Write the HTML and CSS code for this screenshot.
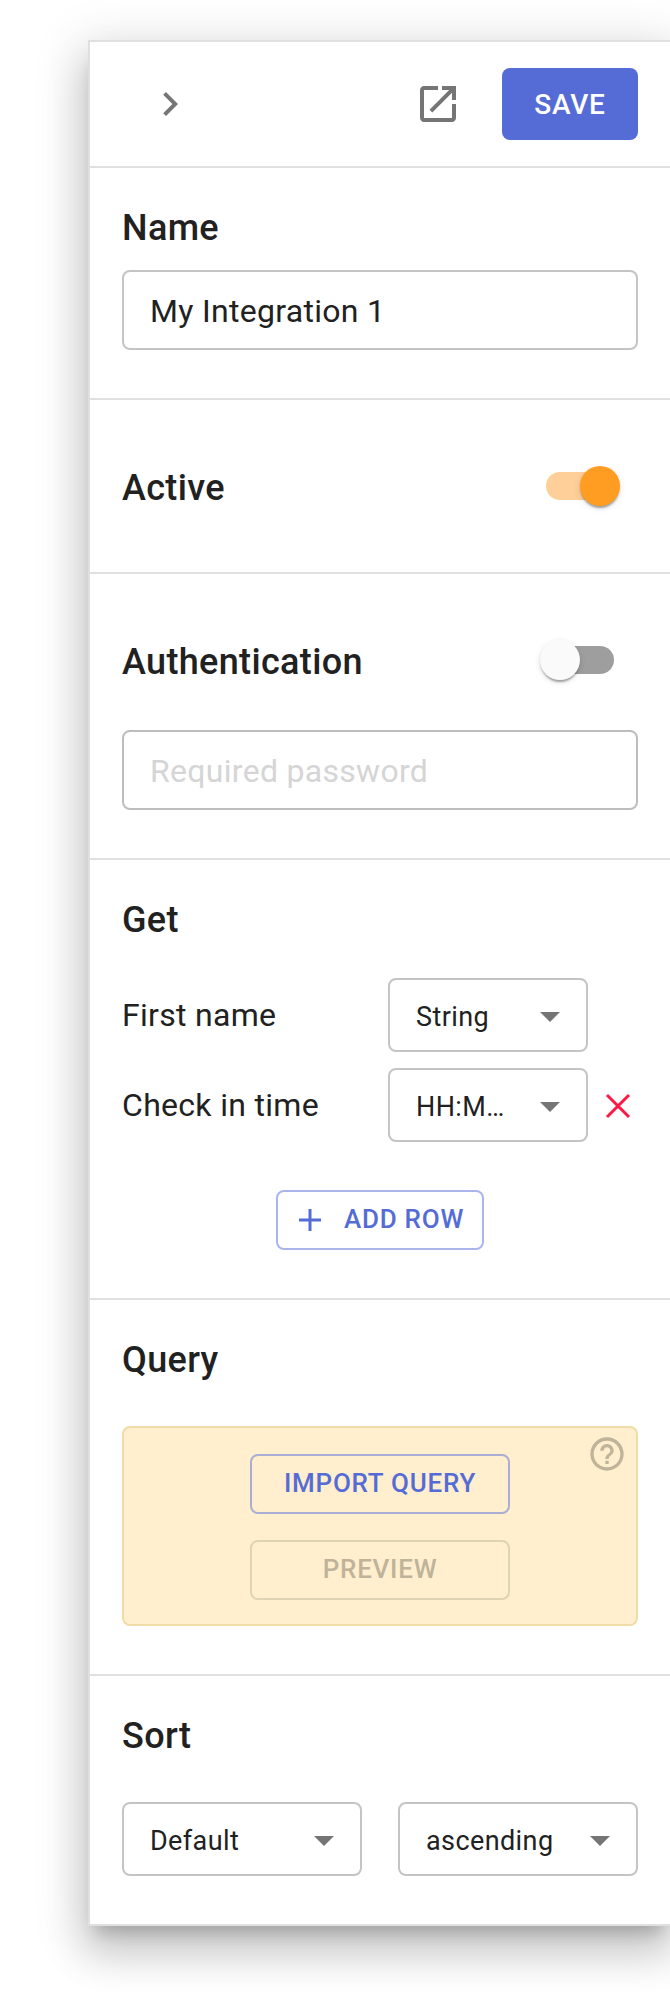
FILE: index.html
```html
<!DOCTYPE html>
<html lang="en">
<head>
<meta charset="utf-8">
<title>Integration settings</title>
<link rel="stylesheet" href="styles.css">
</head>
<body>
<main class="panel">
  <header class="toolbar">
    <button class="icon-button" aria-label="Collapse"><svg class="icon" width="48" height="48" viewBox="0 0 24 24"><path d="M10 6 8.59 7.41 13.17 12l-4.58 4.59L10 18l6-6z"/></svg></button>
    <button class="icon-button open-link" aria-label="Open in new tab"><svg class="icon" width="48" height="48" viewBox="0 0 24 24"><path d="M19 19H5V5h7V3H5c-1.11 0-2 .9-2 2v14c0 1.1.89 2 2 2h14c1.1 0 2-.9 2-2v-7h-2v7zM14 3v2h3.59l-9.83 9.83 1.41 1.41L19 6.41V10h2V3h-7z"/></svg></button>
    <button class="button button-save">SAVE</button>
  </header>

  <section class="section section-name">
    <h2 class="title">Name</h2>
    <div class="field">My Integration 1</div>
  </section>

  <section class="section section-active">
    <h2 class="title">Active</h2>
    <span class="switch switch-on"><span class="thumb"></span></span>
  </section>

  <section class="section section-auth">
    <div class="auth-row">
      <h2 class="title">Authentication</h2>
      <span class="switch switch-off"><span class="thumb"></span></span>
    </div>
    <div class="field placeholder">Required password</div>
  </section>

  <section class="section section-get">
    <h2 class="title">Get</h2>
    <div class="rows">
      <div class="row">
        <span class="row-label">First name</span>
        <div class="select"><span class="value">String</span><svg class="icon" width="48" height="48" viewBox="0 0 24 24"><path d="m7 10 5 5 5-5z"/></svg></div>
      </div>
      <div class="row">
        <span class="row-label">Check in time</span>
        <div class="select"><span class="value">HH:M…</span><svg class="icon" width="48" height="48" viewBox="0 0 24 24"><path d="m7 10 5 5 5-5z"/></svg></div>
        <svg class="remove" width="26" height="26" viewBox="0 0 26 26"><path d="M2 2 24 24M24 2 2 24"/></svg>
      </div>
    </div>
    <button class="button button-outlined button-add"><svg width="22" height="22" viewBox="0 0 22 22"><path d="M11 0v22M0 11h22"/></svg><span>ADD ROW</span></button>
  </section>

  <section class="section section-query">
    <h2 class="title">Query</h2>
    <div class="query-box">
      <svg class="help" width="40" height="40" viewBox="0 0 24 24"><path d="M11 18h2v-2h-2v2zm1-16C6.48 2 2 6.48 2 12s4.48 10 10 10 10-4.48 10-10S17.52 2 12 2zm0 18c-4.41 0-8-3.59-8-8s3.59-8 8-8 8 3.59 8 8-3.59 8-8 8zm0-14c-2.21 0-4 1.79-4 4h2c0-1.1.9-2 2-2s2 .9 2 2c0 2-3 1.75-3 5h2c0-2.25 3-2.5 3-5 0-2.21-1.79-4-4-4z"/></svg>
      <button class="button button-outlined button-query">IMPORT QUERY</button>
      <button class="button button-outlined button-query button-disabled">PREVIEW</button>
    </div>
  </section>

  <section class="section section-sort">
    <h2 class="title">Sort</h2>
    <div class="sort-row">
      <div class="select"><span class="value">Default</span><svg class="icon" width="48" height="48" viewBox="0 0 24 24"><path d="m7 10 5 5 5-5z"/></svg></div>
      <div class="select"><span class="value">ascending</span><svg class="icon" width="48" height="48" viewBox="0 0 24 24"><path d="m7 10 5 5 5-5z"/></svg></div>
    </div>
  </section>
</main>
</body>
</html>
```
FILE: styles.css
```css
*, *::before, *::after { box-sizing: border-box; }

body {
  margin: 0;
  padding: 40px 0 90px 88px;
  background: #fff;
  color: #212121;
  font-family: Roboto, "Liberation Sans", sans-serif;
  overflow: hidden;
}

.panel {
  width: 582px;
  height: 1886px;
  border: 2px solid #e0e0e0;
  border-right: 0;
  background: #fff;
  box-shadow:
    0 14px 16px -8px rgba(0, 0, 0, .2),
    0 26px 38px 4px rgba(0, 0, 0, .14),
    0 10px 48px 8px rgba(0, 0, 0, .12);
}

button {
  margin: 0;
  padding: 0;
  border: 0;
  background: none;
  font-family: inherit;
}

svg { display: block; flex: none; }
.icon { fill: #757575; }

.toolbar {
  display: flex;
  align-items: center;
  height: 126px;
  padding: 0 32px 0 56px;
  border-bottom: 2px solid #e0e0e0;
}

.open-link { margin: 0 40px 0 auto; }

.button {
  display: flex;
  align-items: center;
  justify-content: center;
  border-radius: 8px;
  font-weight: 500;
}

.button-save {
  width: 136px;
  height: 72px;
  background: #556cd6;
  color: #fff;
  font-size: 28px;
  letter-spacing: .8px;
}

.section {
  padding: 0 32px;
  border-bottom: 2px solid #e0e0e0;
}

.section:last-child { border-bottom: 0; }

.title {
  margin: 0;
  font-size: 36px;
  line-height: 48px;
  font-weight: 500;
  letter-spacing: .35px;
}

.field {
  display: flex;
  align-items: center;
  height: 80px;
  padding: 2px 26px 0;
  border: 2px solid #c4c4c4;
  border-radius: 8px;
  font-size: 32px;
  letter-spacing: .3px;
}

.placeholder { border-color: #bdbdbd; color: #d5d5d5; }

.section-name { height: 232px; padding-top: 36px; }
.section-name .field { margin-top: 18px; }

.section-active {
  display: flex;
  align-items: flex-start;
  justify-content: space-between;
  height: 174px;
  padding: 64px 50px 0 32px;
}

.section-auth { height: 286px; padding-top: 64px; }
.section-auth .field { margin-top: 44px; }

.auth-row {
  display: flex;
  justify-content: space-between;
  padding-right: 24px;
}

.switch {
  display: flex;
  align-items: center;
  width: 68px;
  height: 28px;
  margin-top: 8px;
  border-radius: 14px;
}

.switch-on { justify-content: flex-end; background: #ffcf99; margin-right: 6px; }
.thumb {
  width: 40px;
  height: 40px;
  border-radius: 50%;
  background: #fafafa;
  box-shadow:
    0 4px 2px -2px rgba(0, 0, 0, .2),
    0 2px 2px rgba(0, 0, 0, .14),
    0 2px 6px rgba(0, 0, 0, .12);
}
.switch-on .thumb { background: #ff9d23; margin-right: -6px; }
.switch-off { background: #9e9e9e; }
.switch-off .thumb { margin-left: -6px; }

.section-get { height: 440px; padding-top: 36px; }
.rows { display: grid; gap: 16px; margin-top: 34px; }
.row { display: flex; align-items: center; }
.row-label {
  width: 266px;
  padding-bottom: 1px;
  font-size: 32px;
  letter-spacing: .3px;
}

.select {
  display: flex;
  align-items: center;
  justify-content: space-between;
  width: 200px;
  height: 74px;
  padding: 2px 12px 0 26px;
  border: 2px solid #c4c4c4;
  border-radius: 8px;
  font-size: 27px;
  letter-spacing: .4px;
}

.value { padding-top: 1px; }
.remove { margin: 2px 0 0 17px; fill: none; stroke: #ff1744; stroke-width: 3; }

.button-outlined {
  border: 2px solid #aab6eb;
  color: #556cd6;
  font-size: 26px;
  height: 60px;
  padding-bottom: 2px;
  letter-spacing: .75px;
}

.button-add { width: 208px; margin: 48px auto 0; padding-left: 3px; gap: 23px; }
.button-add svg { margin-top: 2px; fill: none; stroke: #556cd6; stroke-width: 3; }

.section-query { height: 376px; padding-top: 36px; }
.query-box {
  position: relative;
  display: flex;
  flex-direction: column;
  align-items: center;
  gap: 26px;
  height: 200px;
  margin-top: 42px;
  padding-top: 26px;
  border: 2px solid #f1dca7;
  border-radius: 8px;
  background: #ffefcf;
}

.button-query { width: 260px; border-color: #aaaed4; }
.button-disabled { border-color: #dfd3b5; color: #bfb399; }
.help { position: absolute; top: 6px; right: 9px; fill: #bfb399; }

.section-sort { padding-top: 36px; }
.sort-row { display: flex; justify-content: space-between; margin-top: 42px; }
.sort-row .select { width: 240px; }
```
